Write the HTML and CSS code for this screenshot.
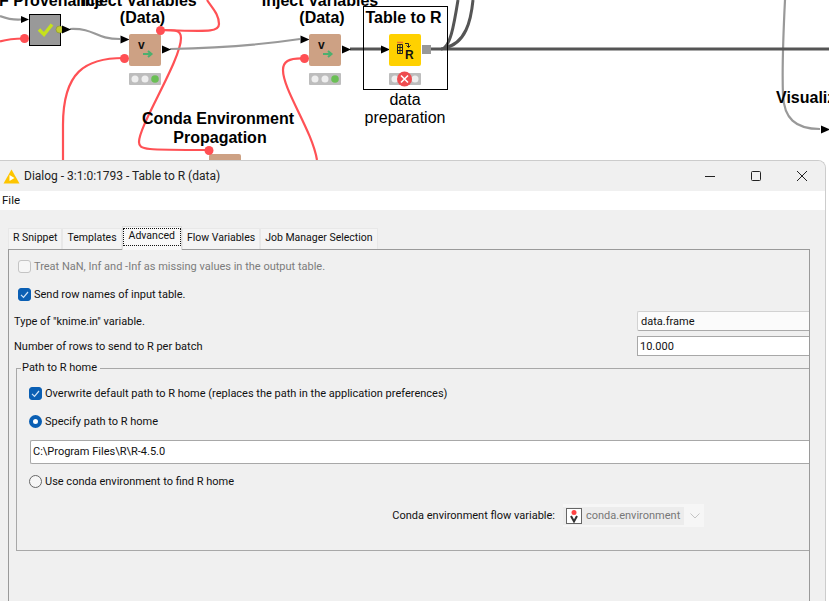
FILE: index.html
```html
<!DOCTYPE html>
<html lang="en">
<head>
<meta charset="utf-8">
<title>KNIME dialog</title>
<link rel="stylesheet" href="styles.css">
</head>
<body>
<svg class="canvas" width="829" height="601" viewBox="0 0 829 601">
  <g class="wire-red">
    <path d="M0 41.5C8 39 16 38.500 24 38.500"/>
    <path d="M124 58C85 58 63 72 63 125V160"/>
    <path d="M160 30C205 31 219 33 219 24C219 14 212 8 207 0"/>
    <path d="M160 30C176 30 181 30 181 38C181 60 139 125 139 142C139 150 145 150 209 150"/>
    <path d="M304 58.500C288 58 283 62 283 70C283 90 312 130 317 160"/>
  </g>
  <g class="wire-gray">
    <path d="M0 16C8 19 14 20 21 19.500"/>
    <path d="M70 29C96 28 94 39 120 39"/>
    <path d="M170 49C220 48 260 45 300 39"/>
    <path d="M785 0C783 40 782 70 783 95C784 118 795 129 820 129"/>
  </g>
  <g class="wire-dark">
    <path d="M350 49H381"/>
    <path d="M431 49H829"/>
    <path d="M441 49C450 49 454 25 458 0"/>
    <path d="M444 48C466 44 471 20 473 0"/>
  </g>

  <rect class="select-box" x="363.500" y="6.500" width="84" height="83"/>

  <text class="label-b" x="-1" y="6">F Provenance</text>
  <text class="label-b mid" x="138.500" y="6">Inject Variables</text>
  <text class="label-b mid" x="142.500" y="23">(Data)</text>
  <text class="label-b mid" x="320" y="6">Inject Variables</text>
  <text class="label-b mid" x="322" y="23">(Data)</text>
  <text class="label-b" x="365.500" y="23">Table to R</text>
  <text class="label-b mid" x="218" y="124">Conda Environment</text>
  <text class="label-b mid" x="220" y="143">Propagation</text>
  <text class="label-b" x="776" y="103">Visualize</text>
  <text class="label-r mid" x="405" y="105">data</text>
  <text class="label-r mid" x="405" y="123">preparation</text>

  <path class="port" d="M21 16l8 3.500l-8 3.500z"/>
  <rect class="node-gray" x="29.500" y="14.500" width="31" height="31"/>
  <path class="check" d="M39 29.500l5 5l8-10"/>
  <circle class="port-dot" cx="59.500" cy="29.500" r="3.500"/>
  <path class="port" d="M62 25.500l9 4l-9 4z"/>
  <circle class="flow-dot" cx="24.500" cy="38.500" r="4.500"/>

  <g>
    <path class="port" d="M120.500 35.500l9 4l-9 4z"/>
    <rect class="node-tan" x="129" y="34" width="32" height="32" rx="2"/>
    <text class="v-mark" x="138" y="49">v</text>
    <path class="arrow-green" d="M143 54h8M148 51l3.500 3l-3.500 3"/>
    <path class="port" d="M162 45.500l9 4l-9 4z"/>
    <rect class="traffic" x="129" y="73" width="32" height="12" rx="1"/>
    <circle class="lamp" cx="135" cy="79" r="3.500"/>
    <circle class="lamp" cx="145" cy="79" r="3.500"/>
    <circle class="lamp-on" cx="155" cy="79" r="3.800"/>
    <circle class="flow-dot" cx="124.500" cy="58.500" r="4.500"/>
    <circle class="flow-dot" cx="160.500" cy="30.500" r="4.500"/>
  </g>

  <g>
    <path class="port" d="M300.500 35.500l9 4l-9 4z"/>
    <rect class="node-tan" x="309" y="34" width="32" height="32" rx="2"/>
    <text class="v-mark" x="318" y="49">v</text>
    <path class="arrow-green" d="M323 54h8M328 51l3.500 3l-3.500 3"/>
    <path class="port" d="M342 45.500l9 4l-9 4z"/>
    <rect class="traffic" x="309" y="73" width="32" height="12" rx="1"/>
    <circle class="lamp" cx="315" cy="79" r="3.500"/>
    <circle class="lamp" cx="325" cy="79" r="3.500"/>
    <circle class="lamp-on" cx="335" cy="79" r="3.800"/>
    <circle class="flow-dot" cx="304.500" cy="58.500" r="4.500"/>
  </g>

  <g>
    <path class="port" d="M381 45.500l9 4l-9 4z"/>
    <rect class="node-yellow" x="389" y="34" width="32" height="32" rx="2"/>
    <path class="tbl-head" d="M397 42.500h6"/>
    <path class="tbl" d="M397.500 44.500h5v9h-5zM397.500 47.500h5M397.500 50.500h5M400 44.500v9"/>
    <path class="tbl" d="M405 43.500h3.500v3.500M406.500 45.500l2 2l2-2"/>
    <text class="r-mark" x="405" y="58.500">R</text>
    <rect class="port-square" x="422" y="45" width="9" height="9"/>
    <rect class="traffic" x="389" y="73" width="32" height="12" rx="1"/>
    <circle class="lamp" cx="395" cy="79" r="3.500"/>
    <circle class="lamp" cx="415" cy="79" r="3.500"/>
    <circle class="err" cx="404.500" cy="79" r="7.500"/>
    <path class="err-x" d="M401 75.500l7 7M408 75.500l-7 7"/>
  </g>

  <rect class="node-tan" x="209" y="154" width="32" height="10" rx="2"/>
  <circle class="flow-dot" cx="209" cy="150.500" r="4.500"/>
  <path class="port" d="M821 125.500l9 4l-9 4z"/>
</svg>

<section class="window">
  <header class="titlebar">
    <svg class="app-icon" width="17" height="15" viewBox="0 0 17 15"><path d="M8.500 .5L16.500 14.500H.5z" fill="#fdc500"/><path d="M6.500 6l5 3l-5 3z" fill="#fff"/></svg>
    <span class="title">Dialog - 3:1:0:1793 - Table to R (data)</span>
    <div class="win-buttons">
      <svg width="12" height="12" viewBox="0 0 12 12"><path d="M1 6.500h10" class="win-glyph"/></svg>
      <svg width="12" height="12" viewBox="0 0 12 12"><rect x="1.500" y="1.500" width="9" height="9" rx="1" class="win-glyph"/></svg>
      <svg width="12" height="12" viewBox="0 0 12 12"><path d="M1 1l10 10M11 1L1 11" class="win-glyph"/></svg>
    </div>
  </header>
  <nav class="menubar">File</nav>
  <div class="body">
    <div class="tabs">
      <span class="tab">R Snippet</span>
      <span class="tab">Templates</span>
      <span class="tab active"><span class="focus">Advanced</span></span>
      <span class="tab">Flow Variables</span>
      <span class="tab">Job Manager Selection</span>
    </div>
    <div class="panel">
      <label class="opt disabled first"><span class="box"></span>Treat NaN, Inf and -Inf as missing values in the output table.</label>
      <label class="opt second"><span class="box on"><svg width="13" height="13" viewBox="0 0 13 13"><path d="M3 6.800l2.500 2.500L10 4" class="tick"/></svg></span>Send row names of input table.</label>

      <div class="field-row row-type">
        <span>Type of "knime.in" variable.</span>
        <span class="select">data.frame</span>
      </div>
      <div class="field-row row-num">
        <span>Number of rows to send to R per batch</span>
        <span class="input num">10.000</span>
      </div>

      <fieldset class="group">
        <legend>Path to R home</legend>
        <label class="opt overwrite"><span class="box on"><svg width="13" height="13" viewBox="0 0 13 13"><path d="M3 6.800l2.500 2.500L10 4" class="tick"/></svg></span>Overwrite default path to R home (replaces the path in the application preferences)</label>
        <label class="opt gap-a"><span class="radio on"></span>Specify path to R home</label>
        <div class="input path">C:\Program Files\R\R-4.5.0</div>
        <label class="opt gap-b"><span class="radio"></span>Use conda environment to find R home</label>
        <div class="conda">
          <span>Conda environment flow variable:</span>
          <span class="combo">
            <span class="combo-value">
              <svg width="16" height="16" viewBox="0 0 16 16"><rect x=".5" y=".5" width="15" height="15" fill="#fff" stroke="#666"/><circle cx="8" cy="4.500" r="2.500" fill="#f44"/><path d="M5 8l3 5.500l3-5.500" fill="none" stroke="#333" stroke-width="2"/></svg>
              conda.environment
            </span>
            <svg class="chev" width="12" height="8" viewBox="0 0 12 8"><path d="M1.500 1.500L6 6l4.500-4.500" fill="none" stroke="#c4c4c4"/></svg>
          </span>
        </div>
      </fieldset>
    </div>
  </div>
</section>
</body>
</html>
```
FILE: styles.css
```css
* { box-sizing: border-box; }
html, body { margin: 0; padding: 0; width: 829px; height: 601px; overflow: hidden; background: #fff; }
body { position: relative; font-family: Roboto, "Open Sans", sans-serif; font-size: 11px; color: #111; }

.canvas { position: absolute; left: 0; top: 0; display: block; }
.canvas path { fill: none; }
.wire-red path { stroke: #ff5155; stroke-width: 2.200; fill: none; }
.wire-gray path { stroke: #999; stroke-width: 2.200; fill: none; }
.wire-dark path { stroke: #555; stroke-width: 3; fill: none; }
.select-box { fill: none; stroke: #000; stroke-width: 1; }
.label-b { font: bold 16px "Liberation Sans", Arial, sans-serif; fill: #000; }
.label-r { font: 16px "Liberation Sans", Arial, sans-serif; fill: #000; }
.mid { text-anchor: middle; }
.canvas .port { fill: #000; }
.node-gray { fill: #999; stroke: #000; stroke-width: 1; }
.node-tan { fill: #cda184; }
.node-yellow { fill: #ffd100; }
.canvas .check { stroke: #c6e21c; stroke-width: 3.500; }
.port-dot { fill: #c3cc33; stroke: #7d8a20; stroke-width: .5; }
.flow-dot { fill: #ff4f53; }
.v-mark { font: bold 12px "Liberation Sans", Arial, sans-serif; fill: #111; }
.canvas .arrow-green { stroke: #4caf6e; stroke-width: 2; }
.traffic { fill: #bdbdbd; }
.lamp { fill: #eee; }
.lamp-on { fill: #6abf55; }
.err { fill: #ee4c50; }
.canvas .err-x { stroke: #fff; stroke-width: 1.600; }
.canvas .tbl { stroke: #222; stroke-width: 1; }
.canvas .tbl-head { stroke: #e8762a; stroke-width: 1.500; }
.r-mark { font: bold 12px "Liberation Sans", Arial, sans-serif; fill: #111; }
.port-square { fill: #999; }

.window {
  position: absolute; left: 0; top: 160px; width: 826px; height: 441px;
  background: #f0f0f0; border: 1px solid #ccc; border-bottom: 0; border-left: 0;
  border-top-right-radius: 8px; overflow: hidden;
  display: flex; flex-direction: column;
}
.titlebar { height: 30px; flex: none; display: flex; align-items: center; padding: 0 0 0 3px; background: #f0f0f0; }
.app-icon { flex: none; margin-right: 4px; }
.title { font-size: 12px; color: #222; }
.win-buttons { margin-left: auto; display: flex; gap: 34px; padding-right: 17px; align-items: center; }
.win-glyph { fill: none; stroke: #222; stroke-width: 1; }
.menubar { height: 19px; flex: none; background: #fff; padding: 1px 2px 0; line-height: 17px; font-size: 11.500px; }
.body { flex: 1; min-height: 0; padding: 14px 15px 0 8px; }
.tabs { display: flex; height: 25px; align-items: flex-end; font-size: 10.500px; }
.tab {
  height: 21px; padding: 0 4px; line-height: 18px; background: #f4f4f4;
  border: 1px solid #e8e8e8; border-bottom: 0; white-space: nowrap;
}
.tab.active { height: 24px; background: #f8f8f8; border-color: #ddd; padding: 1px 0 0; margin-bottom: -1px; position: relative; }
.focus { display: block; padding: 0 5px; height: 18px; line-height: 14px; border: 1px dotted #111; }
.panel { height: 400px; border: 1px solid #9a9a9a; border-bottom: 0; padding: 0 0 0 5px; }
.opt { display: flex; align-items: center; height: 16px; white-space: nowrap; }
.box { width: 13px; height: 13px; flex: none; margin-right: 3px; border: 1px solid #c4c4c4; border-radius: 3px; background: #f6f6f6; display: block; }
.box.on { background: #0a5fb4; border-color: #0a5fb4; position: relative; }
.box.on svg { position: absolute; left: -1px; top: -1px; }
.tick { fill: none; stroke: #cfe3f7; stroke-width: 1.200; }
.radio { width: 13px; height: 13px; flex: none; margin-right: 3px; border-radius: 50%; border: 1px solid #666; background: #f6f6f6; display: block; }
.radio.on { border: 4px solid #0a5fb4; background: #fff; }
.disabled { color: #7c7c7c; }
.first { margin: 8px 0 0 4px; }
.second { margin: 12px 0 0 4px; }
.field-row { display: flex; align-items: center; justify-content: space-between; white-space: nowrap; }
.row-type { margin-top: 9px; height: 20px; }
.row-num { margin-top: 5px; height: 20px; }
.select { width: 172px; height: 20px; background: #fbfbfb; border: 1px solid #d2d2d2; border-bottom-color: #aaa; border-right: 0; border-radius: 2px 0 0 2px; padding: 0 3px; line-height: 20px; }
.input { background: #fff; border: 1px solid #a8a8a8; border-right: 0; height: 20px; line-height: 20px; padding: 0 2px; }
.num { width: 172px; }
.group {
  margin: 5px 0 0 2px; padding: 0 0 0 12px; height: 190px; min-width: 0;
  border: 1px solid #a8a8a8; border-right: 0; position: relative;
}
.group legend { padding: 0 3px 0 1px; margin-left: -8px; line-height: 14px; }
.overwrite { margin-top: 10px; }
.gap-a { margin-top: 12px; }
.path { margin: 11px 0 0 1px; height: 24px; line-height: 22px; border-radius: 2px 0 0 2px; }
.gap-b { margin-top: 9px; }
.conda { display: flex; align-items: center; justify-content: flex-end; margin: 15px 105px 0 0; gap: 8px; white-space: nowrap; }
.combo { display: flex; align-items: center; width: 141px; height: 23px; background: #f6f6f6; padding: 0; }
.combo-value { display: flex; align-items: center; gap: 4px; width: 121px; height: 18px; background: #ececec; padding-left: 3px; color: #777; }
.chev { margin-left: 5px; }
```
